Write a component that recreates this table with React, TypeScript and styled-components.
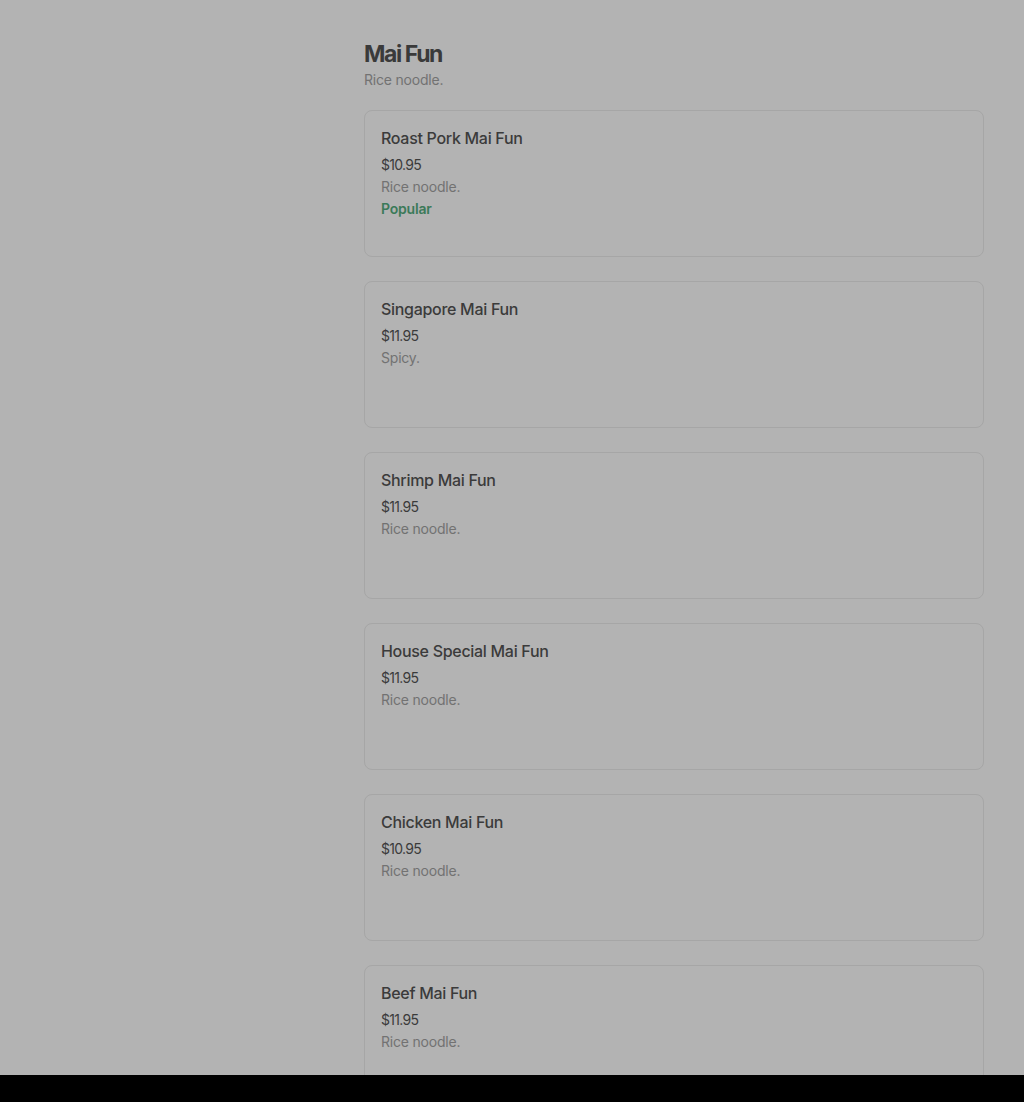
import React from "react";
import styled, {createGlobalStyle} from "styled-components";

const GlobalStyle = createGlobalStyle`
  html, body {
    margin: 0;
    padding: 0;
    background-color: #b3b3b3;
  }
  body {
    font-family: Inter, "Noto Sans", sans-serif;
  }
`;

export const Page = styled.div`
  display: grid;
  grid-template-columns: 1fr 620px;
  padding: 38px 40px 60px 0;
`;

export const Sidebar = styled.aside``;

export const Section = styled.section`
  display: flex;
  flex-direction: column;
`;

export const SectionTitle = styled.h2`
  font-size: 23px;
  line-height: 32px;
  font-weight: 700;
  letter-spacing: -1.4px;
  color: #3a3a3a;
  margin: 0;
`;

export const SectionDesc = styled.p`
  font-size: 14px;
  line-height: 20px;
  letter-spacing: -0.2px;
  color: #727272;
  margin: 0 0 20px;
`;

export const ItemList = styled.div`
  display: flex;
  flex-direction: column;
  gap: 24px;
`;

export const ItemCard = styled.div`
  height: 147px;
  box-sizing: border-box;
  border: 1px solid #a6a6a6;
  border-radius: 8px;
  padding: 16px;
  display: flex;
  flex-direction: column;
`;

export const ItemName = styled.div`
  font-size: 16px;
  line-height: 22px;
  font-weight: 500;
  color: #3b3b3b;
  margin-bottom: 5px;
  letter-spacing: -0.3px;
`;

export const ItemLine = styled.div<{ $tone?: "price" | "desc" | "tag" }>`
  font-size: 14px;
  line-height: 22px;
  letter-spacing: ${({$tone}) => $tone === "price" ? "-0.7px" : "-0.2px"};
  color: ${({$tone}) => $tone === "price" ? "#3b3b3b" : $tone === "tag" ? "#3b7a59" : "#727272"};
  font-weight: ${({$tone}) => $tone === "tag" ? 600 : 400};
`;

export const BottomBar = styled.div`
  position: fixed;
  left: 0; right: 0; bottom: 0;
  height: 27px;
  background-color: #000000;
`;

const items = [
    {name: "Roast Pork Mai Fun", price: "$10.95", desc: "Rice noodle.", popular: true},
    {name: "Singapore Mai Fun", price: "$11.95", desc: "Spicy."},
    {name: "Shrimp Mai Fun", price: "$11.95", desc: "Rice noodle."},
    {name: "House Special Mai Fun", price: "$11.95", desc: "Rice noodle."},
    {name: "Chicken Mai Fun", price: "$10.95", desc: "Rice noodle."},
    {name: "Beef Mai Fun", price: "$11.95", desc: "Rice noodle."},
];

const App = () => {
    return (
        <>
            <GlobalStyle/>
            <Page>
                <Sidebar/>
                <Section>
                    <SectionTitle>Mai Fun</SectionTitle>
                    <SectionDesc>Rice noodle.</SectionDesc>
                    <ItemList>
                        {items.map((item) => (
                            <ItemCard key={item.name}>
                                <ItemName>{item.name}</ItemName>
                                <ItemLine $tone="price">{item.price}</ItemLine>
                                <ItemLine $tone="desc">{item.desc}</ItemLine>
                                {item.popular && <ItemLine $tone="tag">Popular</ItemLine>}
                            </ItemCard>
                        ))}
                    </ItemList>
                </Section>
            </Page>
            <BottomBar/>
        </>
    );
};

export default App;
